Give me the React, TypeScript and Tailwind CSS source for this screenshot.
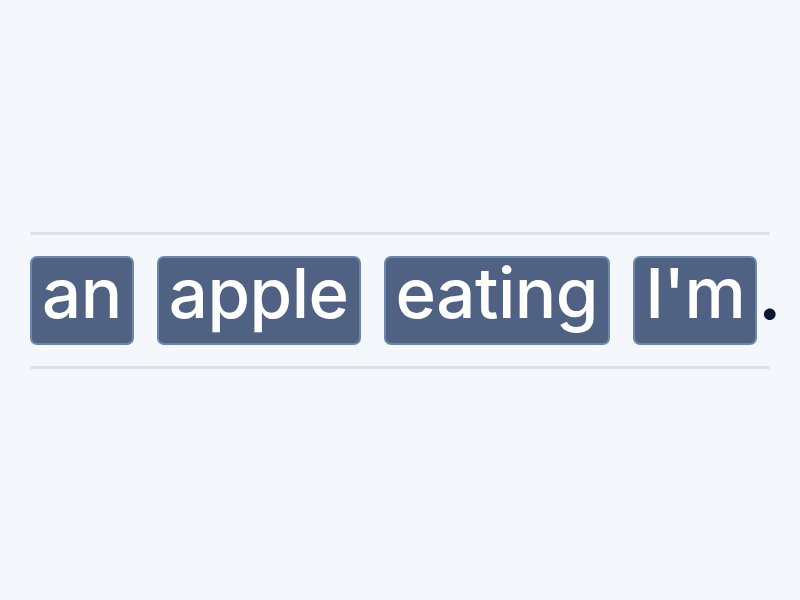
import React from 'react';

const words = ['an', 'apple', 'eating', "I'm"];

export default function App() {
  return (
    <div className="w-[800px] h-[600px] bg-[#f4f7fb] flex flex-col justify-center px-[30px] font-['Inter',sans-serif] [font-variant-ligatures:none]">
      <div className="h-[3px] bg-[#dde1e7] rounded-full" />
      <div className="flex items-end py-[21px]">
        {words.map((w, i) => (
          <div
            key={w}
            className={`h-[89px] flex items-center px-[10px] bg-[#4f6283] border-2 border-[#6988ab] rounded-[7px] text-white text-[69px] font-medium leading-none tracking-[-0.5px] ${i > 0 ? 'ml-[23px]' : ''}`}
          >
            <span className="-mt-[14px]">{w}</span>
          </div>
        ))}
        <span className="text-[#0b1730] text-[69px] leading-none font-bold mb-[16px] ml-[1px]">.</span>
      </div>
      <div className="h-[3px] bg-[#dde1e7] rounded-full" />
    </div>
  );
}
